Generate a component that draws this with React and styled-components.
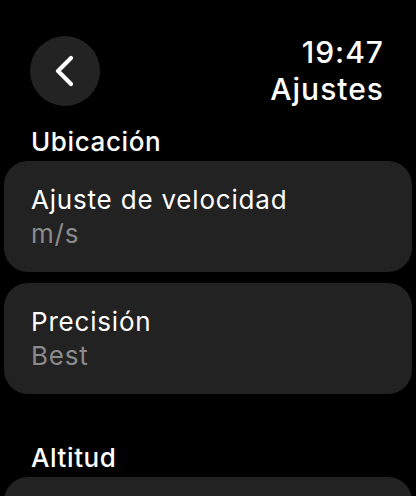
import React from "react";
import styled, { createGlobalStyle } from "styled-components";

const GlobalStyle = createGlobalStyle`
  html, body {
    margin: 0;
    padding: 0;
    background: #000;
  }
  body {
    font-family: Inter, "Noto Sans", sans-serif;
    color: #fff;
    -webkit-font-smoothing: antialiased;
  }
`;

const Screen = styled.div`
  width: 416px;
  height: 496px;
  overflow: hidden;
  background: #000;
`;

const Header = styled.header`
  display: flex;
  justify-content: space-between;
  align-items: flex-start;
  padding: 36px 32px 0 30px;
  height: 80px;
`;

const BackButton = styled.button`
  width: 70px;
  height: 70px;
  border-radius: 50%;
  border: 0;
  padding: 0;
  background: #232323;
  display: flex;
  align-items: center;
  justify-content: center;
`;

const TitleBlock = styled.div`
  display: flex;
  flex-direction: column;
  align-items: flex-end;
  margin-top: -2px;
  font-weight: 500;
  font-size: 30px;
  line-height: 37px;
  letter-spacing: 1px;
`;

const SectionLabel = styled.h2`
  margin: 0;
  padding: ${(p) => (p.spaced ? "46px" : "8px")} 0 0 31px;
  font-size: 26px;
  font-weight: 500;
  line-height: 35px;
  letter-spacing: 0.6px;
`;

const List = styled.div`
  display: flex;
  flex-direction: column;
  gap: 11px;
  padding: 0 4px;
  margin-top: 2px;
`;

const Card = styled.div`
  height: 111px;
  box-sizing: border-box;
  border-radius: 24px;
  background: #222222;
  padding: 22px 27px 0;
`;

const CardTitle = styled.div`
  font-size: 26px;
  line-height: 34px;
  letter-spacing: 0.8px;
`;

const CardValue = styled.div`
  font-size: 26px;
  line-height: 34px;
  letter-spacing: 0.8px;
  color: #8b8b8e;
`;

const Chevron = () => (
  <svg width="24" height="34" viewBox="0 0 24 34">
    <path
      d="M18 4 L5 17 L18 30"
      fill="none"
      stroke="#fff"
      strokeWidth="4.2"
      strokeLinecap="round"
      strokeLinejoin="round"
    />
  </svg>
);

const settings = [
  { title: "Ajuste de velocidad", value: "m/s" },
  { title: "Precisión", value: "Best" },
];

export default function App() {
  return (
    <Screen>
      <GlobalStyle />
      <Header>
        <BackButton aria-label="Atrás">
          <Chevron />
        </BackButton>
        <TitleBlock>
          <span>19:47</span>
          <span>Ajustes</span>
        </TitleBlock>
      </Header>
      <SectionLabel>Ubicación</SectionLabel>
      <List>
        {settings.map((s) => (
          <Card key={s.title}>
            <CardTitle>{s.title}</CardTitle>
            <CardValue>{s.value}</CardValue>
          </Card>
        ))}
      </List>
      <SectionLabel spaced>Altitud</SectionLabel>
      <List>
        <Card />
      </List>
    </Screen>
  );
}
